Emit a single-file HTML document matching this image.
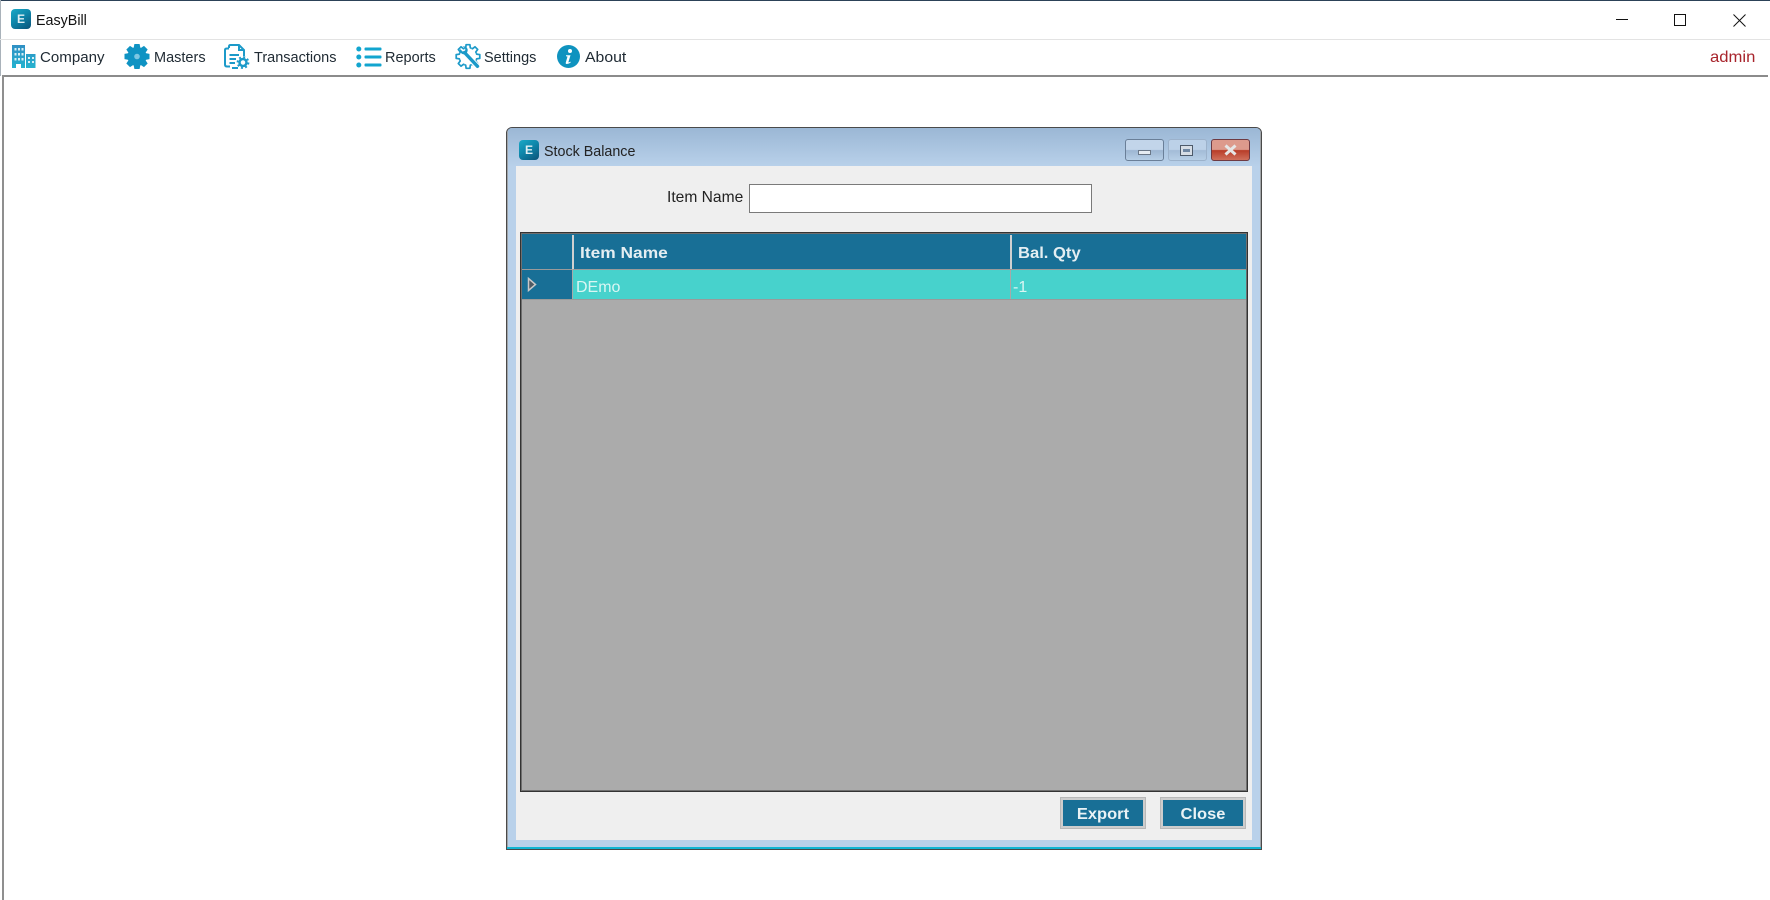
<!DOCTYPE html>
<html><head><meta charset="utf-8"><title>EasyBill</title>
<style>
html,body{margin:0;padding:0;background:#fff;width:1770px;height:900px;overflow:hidden}
body{position:relative;font-family:"Liberation Sans",sans-serif;color:#222}
.a{position:absolute}
.t{position:absolute;white-space:nowrap;line-height:20px;height:20px;transform-origin:0 50%}
.m{font-size:14.5px;top:48px;color:#1f2a33}
.h{font-size:15.5px;font-weight:bold;color:#e4eef2;top:244px}
.c{font-size:16px;color:#d9f6f3;top:278px}
.b{top:805px;width:86px;text-align:center;font-size:16px;font-weight:bold;color:#e9f2f5;transform-origin:50% 50%;transform:scaleX(1.03)}
svg{position:absolute;overflow:visible}
.logo{position:absolute;border-radius:4px;background:linear-gradient(145deg,#1aa9c6 0%,#0f87ab 45%,#0b5278 100%);color:#dfeef3;font-weight:bold;text-align:center}
.btn{position:absolute;top:797px;width:86px;height:32px;box-sizing:border-box;border:3px solid #cdcdcd;background:#186f96;outline:1px solid #b8b8b8;outline-offset:-1px}
</style></head><body>
<div class="a" style="left:0;top:0;width:1770px;height:1px;background:#2c4258"></div>
<div class="a" style="left:0;top:0;width:1px;height:76px;background:#a9b2ba"></div>
<div class="logo" style="left:11px;top:9px;width:20px;height:20px;font-size:12px;line-height:20px">E</div>
<div class="t" style="left:36px;top:11px;font-size:14.3px;color:#111">EasyBill</div>
<svg style="left:1616px;top:14px" width="12" height="12"><path d="M0 5.5H12" stroke="#111" stroke-width="1"/></svg>
<svg style="left:1674px;top:14px" width="12" height="12"><rect x=".5" y=".5" width="11" height="11" fill="none" stroke="#111"/></svg>
<svg style="left:1733px;top:14px" width="13" height="13"><path d="M.5.5L12.5 12.5M12.5.5L.5 12.5" stroke="#111" stroke-width="1"/></svg>
<div class="a" style="left:0;top:39px;width:1770px;height:1px;background:#e3e3e3"></div>
<div class="a" style="left:2px;top:75px;width:1766px;height:2px;background:#8b8b8b"></div>
<div class="a" style="left:2px;top:75px;width:2px;height:825px;background:#8f8f8f"></div>

<svg style="left:12px;top:44px" width="24" height="25" viewBox="0 0 24 25"><defs><linearGradient id="bg" x1="0" y1="0" x2="0" y2="1"><stop offset="0" stop-color="#2f8fc4"/><stop offset="1" stop-color="#25b3cf"/></linearGradient></defs><path fill="url(#bg)" d="M0 1h13v23H0zM14 10h9.5v14H14z"/><g fill="#d8eef5"><path d="M2.500 4h2v2.500h-2zM6 4h2v2.500H6zM9.500 4h2v2.500h-2zM2.500 9h2v2.500h-2zM6 9h2v2.500H6zM9.500 9h2v2.500h-2zM2.500 14h2v2.500h-2zM6 14h2v2.500H6zM9.500 14h2v2.500h-2zM16 13h2v2h-2zM20 13h2v2h-2zM16 17h2v2h-2zM20 17h2v2h-2z"/></g><path d="M4 24v-4h5v4" fill="#fff"/></svg>
<div class="t m" style="left:40px;transform:scaleX(1.04)">Company</div>
<svg style="left:124px;top:44px" width="26" height="25" viewBox="-13 -12.500 26 25">
<circle r="9.500" fill="#0f93c3"/>
<g fill="#0f93c3"><path d="M8 -3.500L12.500 -2.600V2.600L8 3.500Z"/><path transform="rotate(45)" d="M8 -3.500L12.500 -2.600V2.600L8 3.500Z"/><path transform="rotate(90)" d="M8 -3.500L12.500 -2.600V2.600L8 3.500Z"/><path transform="rotate(135)" d="M8 -3.500L12.500 -2.600V2.600L8 3.500Z"/><path transform="rotate(180)" d="M8 -3.500L12.500 -2.600V2.600L8 3.500Z"/><path transform="rotate(225)" d="M8 -3.500L12.500 -2.600V2.600L8 3.500Z"/><path transform="rotate(270)" d="M8 -3.500L12.500 -2.600V2.600L8 3.500Z"/><path transform="rotate(315)" d="M8 -3.500L12.500 -2.600V2.600L8 3.500Z"/></g>
<circle r="2.800" fill="#7cc6e2"/></svg>
<div class="t m" style="left:154px">Masters</div>
<svg style="left:224px;top:44px" width="26" height="25" viewBox="0 0 26 25"><path d="M5 4V2.500Q5 1 6.500 1H15L20 6V12M6 22.500H3Q1 22.500 1 20.500V6Q1 4.500 3 4.500H5M15 1V6H20M5.500 11H15M5.500 15H12M5.500 19H11M8 24H14" fill="none" stroke="#1c9ac9" stroke-width="2"/><circle cx="19" cy="18.500" r="3.500" fill="none" stroke="#1c9ac9" stroke-width="2.500"/><circle cx="19" cy="18.500" r="5.500" fill="none" stroke="#1c9ac9" stroke-width="1.800" stroke-dasharray="2 2.320"/></svg>
<div class="t m" style="left:254px">Transactions</div>
<svg style="left:356px;top:46px" width="26" height="22" viewBox="0 0 26 22"><g fill="#12a5cf"><circle cx="2.800" cy="3" r="2.500"/><circle cx="2.800" cy="11" r="2.500"/><circle cx="2.800" cy="19" r="2.500"/><rect x="8.500" y="1.500" width="17" height="3" rx="1"/><rect x="8.500" y="9.500" width="17" height="3" rx="1"/><rect x="8.500" y="17.500" width="17" height="3" rx="1"/></g></svg>
<div class="t m" style="left:385px">Reports</div>
<svg style="left:455px;top:44px" width="26" height="25" viewBox="-13 -12.500 26 25">
<g fill="none" stroke="#1c9ac9" stroke-width="1.700" stroke-linejoin="round"><path d="M8.300 -3.400L8.700 -2.300L11.800 -1.900V1.900L8.700 2.300L8.300 3.400"/><path transform="rotate(45)" d="M8.300 -3.400L8.700 -2.300L11.800 -1.900V1.900L8.700 2.300L8.300 3.400"/><path transform="rotate(90)" d="M8.300 -3.400L8.700 -2.300L11.800 -1.900V1.900L8.700 2.300L8.300 3.400"/><path transform="rotate(135)" d="M8.300 -3.400L8.700 -2.300L11.800 -1.900V1.900L8.700 2.300L8.300 3.400"/><path transform="rotate(180)" d="M8.300 -3.400L8.700 -2.300L11.800 -1.900V1.900L8.700 2.300L8.300 3.400"/><path transform="rotate(225)" d="M8.300 -3.400L8.700 -2.300L11.800 -1.900V1.900L8.700 2.300L8.300 3.400"/><path transform="rotate(270)" d="M8.300 -3.400L8.700 -2.300L11.800 -1.900V1.900L8.700 2.300L8.300 3.400"/><path transform="rotate(315)" d="M8.300 -3.400L8.700 -2.300L11.800 -1.900V1.900L8.700 2.300L8.300 3.400"/></g>
<path d="M-2 -2.500L9 9.500" stroke="#fff" stroke-width="5.500"/>
<path d="M-3.500 -4L9.500 9.800" stroke="#1c9ac9" stroke-width="3.400" stroke-linecap="round"/>
<path d="M-8.200 -7.800L-5.200 -4.900L-3 -5.500L-2.600 -8L-5.300 -10.300Q-1 -10.500 -.3 -7Q0 -3.500 -3.500 -2Q-8.500 -2.500 -8.200 -7.800Z" fill="#1c9ac9"/></svg>
<div class="t m" style="left:484px">Settings</div>
<svg style="left:557px;top:45px" width="23" height="23" viewBox="0 0 23 23"><circle cx="11.500" cy="11.500" r="11.500" fill="#0f93bf"/><circle cx="13" cy="6" r="2" fill="#fff"/><path d="M9 10.300H13.500L11.500 16.800Q11.300 17.600 12 17.400L13.500 16.600L13.700 17.500Q11.800 19 9.800 19Q8.400 19 8.800 17.500L10.500 11.500L9 11.200Z" fill="#fff"/></svg>
<div class="t m" style="left:585px;transform:scaleX(1.09)">About</div>
<div class="t" style="left:1710px;top:48px;font-size:16px;color:#a8242c;transform:scaleX(1.04)">admin</div>

<!-- dialog -->
<div class="a" style="left:506px;top:127px;width:756px;height:723px;box-sizing:border-box;background:#b9d1ea;border:1px solid #4a4a4a;border-radius:6px 6px 0 0;overflow:hidden">
 <div class="a" style="left:0;top:0;width:754px;height:39px;background:linear-gradient(#9bb7d5,#b9d1ea)"></div>
 <div class="a" style="left:0;top:0;width:1px;height:721px;background:#a0a4a8"></div>
 <div class="a" style="right:0;top:0;width:1px;height:721px;background:#a0a4a8"></div>
 <div class="a" style="left:0;bottom:0;width:754px;height:2px;background:#11b5d2"></div>
</div>
<div class="logo" style="left:519px;top:140px;width:20px;height:20px;font-size:12px;line-height:20px">E</div>
<div class="t" style="left:544px;top:142px;font-size:14.300px;color:#222">Stock Balance</div>
<div class="a" style="left:1125px;top:139px;width:39px;height:22px;box-sizing:border-box;border:1px solid #6a7f98;border-radius:3px;background:linear-gradient(#c2d5ea 0 48%,#9db6d2 52%,#b7cfe6)"><div class="a" style="left:12px;top:10px;width:13px;height:5px;background:#e6ecf2;border:1px solid #6a7787;box-sizing:border-box"></div></div>
<div class="a" style="left:1168px;top:139px;width:39px;height:22px;box-sizing:border-box;border:1px solid #9cb2cb;border-radius:3px;background:linear-gradient(#bcd1e8 0 48%,#a3bcd7 52%,#b7cfe6)"><div class="a" style="left:11px;top:5px;width:13px;height:11px;background:#d6dde5;border:1px solid #4d5a6a;box-sizing:border-box"><div class="a" style="left:2px;top:3px;width:7px;height:3px;background:#6f87a3"></div></div></div>
<div class="a" style="left:1211px;top:139px;width:39px;height:22px;box-sizing:border-box;border:1px solid #6e3a42;border-radius:3px;background:linear-gradient(#dd9a8c 0 48%,#b83c28 52%,#d0705c)"><svg style="left:12px;top:4px" width="13" height="12"><path d="M1.500 1.500L11.500 10.500M11.500 1.500L1.500 10.500" stroke="#e6e6e6" stroke-width="3"/></svg></div>

<div class="a" style="left:516px;top:166px;width:736px;height:674px;background:#efefef"></div>
<div class="t" style="left:667px;top:188px;font-size:15.600px;color:#222">Item Name</div>
<div class="a" style="left:749px;top:184px;width:343px;height:29px;box-sizing:border-box;background:#fff;border:1px solid #7a7a7a"></div>

<!-- grid -->
<div class="a" style="left:520px;top:232px;width:728px;height:560px;box-sizing:border-box;background:#ababab;border:1px solid #333;box-shadow:inset 0 0 0 1px #6f6f6f"></div>
<div class="a" style="left:522px;top:234px;width:724px;height:35px;background:#186f96"></div>
<div class="a" style="left:572px;top:235px;width:2px;height:34px;background:#d0d0d0"></div>
<div class="a" style="left:1010px;top:235px;width:2px;height:34px;background:#d0d0d0"></div>
<div class="t h" style="left:580px;transform:scaleX(1.12)">Item Name</div>
<div class="t h" style="left:1018px;transform:scaleX(1.07)">Bal. Qty</div>
<div class="a" style="left:522px;top:269px;width:724px;height:1px;background:#9a9a9a"></div>
<div class="a" style="left:522px;top:270px;width:50px;height:29px;background:#186f96"></div>
<div class="a" style="left:572px;top:270px;width:674px;height:29px;background:#47d2cc"></div>
<div class="a" style="left:572px;top:269px;width:1px;height:31px;background:#a8a8a8"></div>
<div class="a" style="left:1010px;top:270px;width:1px;height:30px;background:#a8a8a8"></div>
<div class="a" style="left:522px;top:299px;width:724px;height:1px;background:#9a9a9a"></div>
<svg style="left:527px;top:277px" width="11" height="15"><path d="M1.500 1.500L8.500 7.500L1.500 13.500Z" fill="#4f5a63" stroke="#c8c8c8" stroke-width="1.500"/></svg>
<div class="t c" style="left:576px">DEmo</div>
<div class="t c" style="left:1013px">-1</div>

<!-- buttons -->
<div class="btn" style="left:1060px"></div>
<div class="t b" style="left:1060px">Export</div>
<div class="btn" style="left:1160px"></div>
<div class="t b" style="left:1160px">Close</div>
</body></html>
